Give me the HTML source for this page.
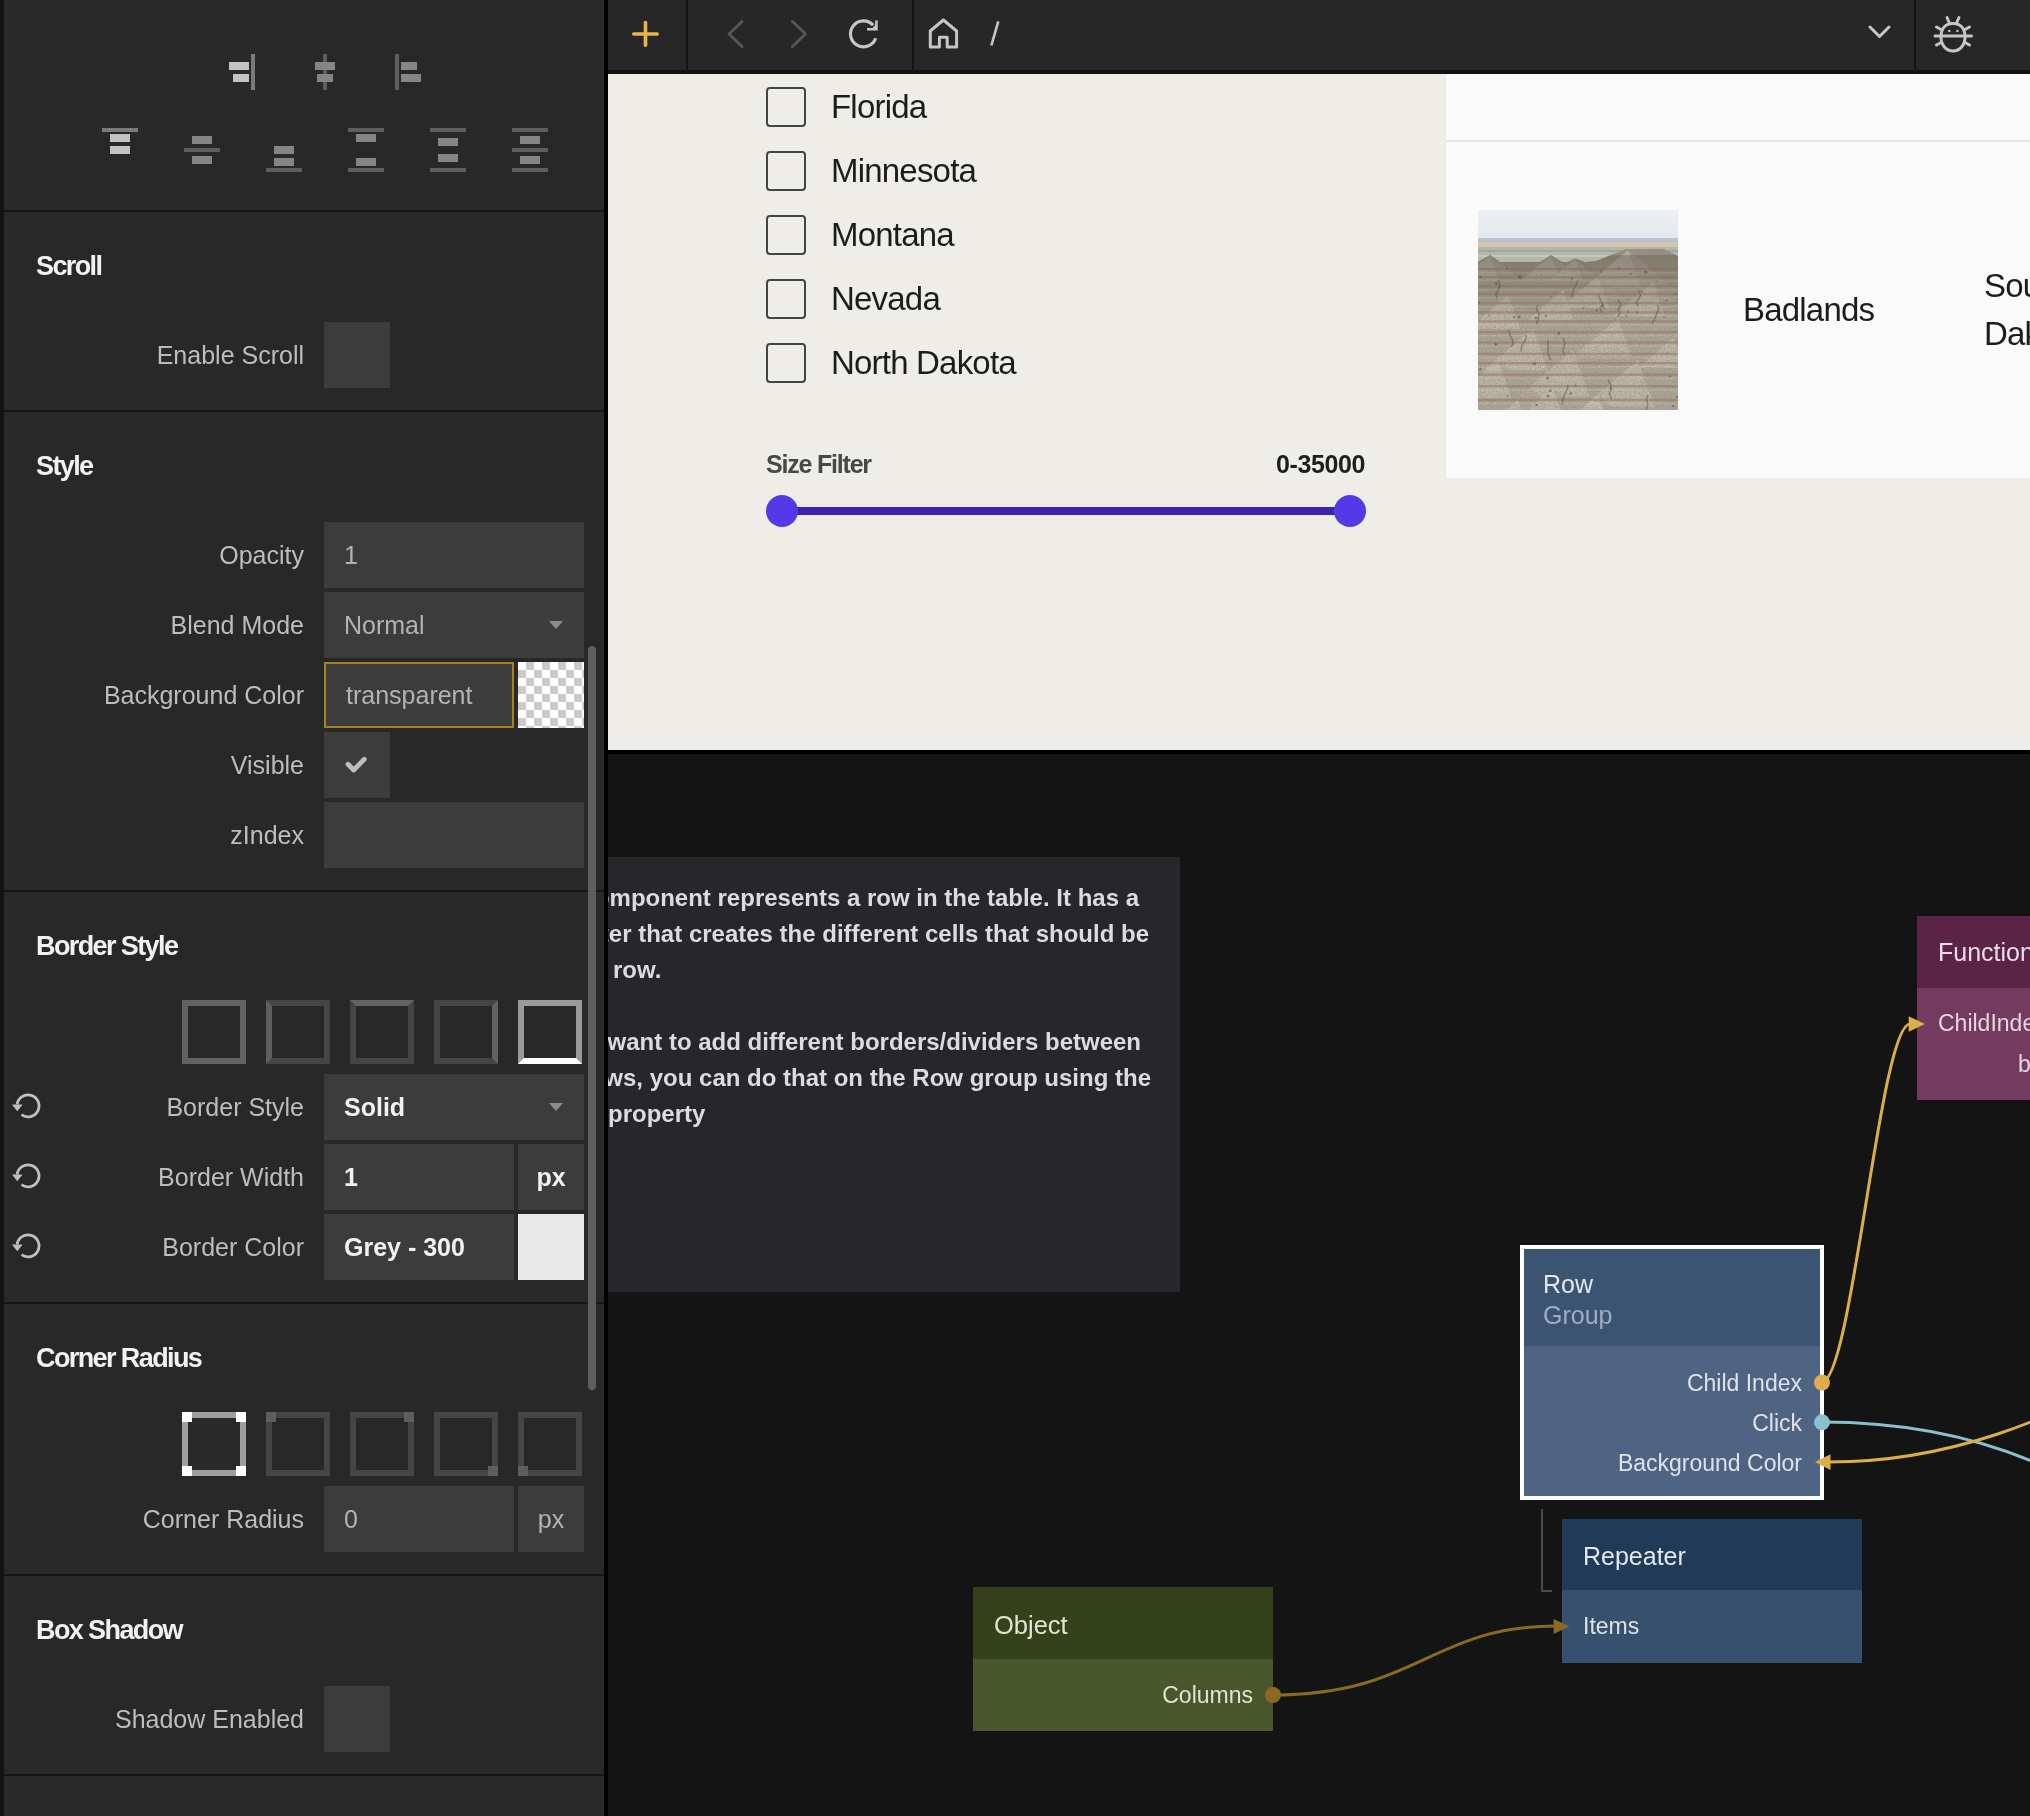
<!DOCTYPE html>
<html><head><meta charset="utf-8">
<style>
*{margin:0;padding:0;box-sizing:border-box}
html,body{width:2030px;height:1816px;overflow:hidden;background:#141414;font-family:"Liberation Sans",sans-serif}
.a{position:absolute}
#lp{position:absolute;left:0;top:0;width:604px;height:1816px;background:#282828}
#lstrip{position:absolute;left:0;top:0;width:4px;height:1816px;background:#131313}
.sep{position:absolute;left:4px;width:600px;height:2px;background:#141414}
.h{position:absolute;left:36px;font-size:27px;font-weight:bold;color:#f2f2f2;line-height:30px;white-space:nowrap;letter-spacing:-1.6px}
.lb{position:absolute;right:300px;font-size:25px;color:#bdbdbd;line-height:66px;height:66px;white-space:nowrap;text-align:right}
.in{position:absolute;left:324px;width:260px;height:66px;background:#3c3c3c;font-size:25px;line-height:66px;color:#b3b3b3;padding-left:20px;white-space:nowrap}
.in.s{width:190px}
.unit{position:absolute;left:518px;width:66px;height:66px;background:#3c3c3c;font-size:25px;line-height:66px;color:#b3b3b3;text-align:center}
.cb{position:absolute;left:324px;width:66px;height:66px;background:#3c3c3c}
.bold{font-weight:bold;color:#f2f2f2}
.tri{position:absolute;left:549px;width:0;height:0;border-left:7px solid transparent;border-right:7px solid transparent;border-top:8px solid #8c8c8c}
.ic{position:absolute;background:#858585}
.icl{position:absolute;background:#5e5e5e}
.ich{background:#c2c2c2}
.iclh{background:#7a7a7a}
.pt{font-size:33px;color:#1c1c1c;white-space:nowrap;letter-spacing:-0.8px}
.cl{position:absolute;font-size:24px;font-weight:bold;color:#dcdcdc;line-height:36px;white-space:nowrap}
.nt{font-size:25px;color:#e4e7ec;line-height:40px;white-space:nowrap}
.np{font-size:23px;color:#dfe2e8;line-height:40px;white-space:nowrap}
</style></head><body><div id="root" style="position:absolute;left:0;top:0;width:2030px;height:1816px;overflow:hidden;will-change:transform">
<div id="lp">
  <div id="lstrip"></div>
  <!-- align icons row 1 -->
  <div class="icl iclh" style="left:251px;top:54px;width:4px;height:36px"></div>
  <div class="ic ich" style="left:229px;top:62px;width:20px;height:8px"></div>
  <div class="ic ich" style="left:233px;top:74px;width:16px;height:8px"></div>

  <div class="icl" style="left:323px;top:54px;width:4px;height:36px"></div>
  <div class="ic" style="left:315px;top:62px;width:20px;height:8px"></div>
  <div class="ic" style="left:317px;top:74px;width:16px;height:8px"></div>

  <div class="icl" style="left:395px;top:54px;width:4px;height:36px"></div>
  <div class="ic" style="left:401px;top:62px;width:16px;height:8px"></div>
  <div class="ic" style="left:401px;top:74px;width:20px;height:8px"></div>
  <!-- align icons row 2 -->
  <div class="icl iclh" style="left:102px;top:128px;width:36px;height:4px"></div>
  <div class="ic ich" style="left:110px;top:134px;width:20px;height:8px"></div>
  <div class="ic ich" style="left:110px;top:146px;width:20px;height:8px"></div>

  <div class="icl" style="left:184px;top:148px;width:36px;height:4px"></div>
  <div class="ic" style="left:192px;top:136px;width:20px;height:8px"></div>
  <div class="ic" style="left:192px;top:156px;width:20px;height:8px"></div>

  <div class="icl" style="left:266px;top:168px;width:36px;height:4px"></div>
  <div class="ic" style="left:274px;top:146px;width:20px;height:8px"></div>
  <div class="ic" style="left:274px;top:158px;width:20px;height:8px"></div>

  <div class="icl" style="left:348px;top:128px;width:36px;height:4px"></div>
  <div class="icl" style="left:348px;top:168px;width:36px;height:4px"></div>
  <div class="ic" style="left:356px;top:134px;width:20px;height:8px"></div>
  <div class="ic" style="left:356px;top:158px;width:20px;height:8px"></div>

  <div class="icl" style="left:430px;top:128px;width:36px;height:4px"></div>
  <div class="icl" style="left:430px;top:168px;width:36px;height:4px"></div>
  <div class="ic" style="left:438px;top:138px;width:20px;height:8px"></div>
  <div class="ic" style="left:438px;top:154px;width:20px;height:8px"></div>

  <div class="icl" style="left:512px;top:128px;width:36px;height:4px"></div>
  <div class="icl" style="left:512px;top:148px;width:36px;height:4px"></div>
  <div class="icl" style="left:512px;top:168px;width:36px;height:4px"></div>
  <div class="ic" style="left:520px;top:136px;width:20px;height:8px"></div>
  <div class="ic" style="left:520px;top:156px;width:20px;height:8px"></div>

  <div class="sep" style="top:210px"></div>
  <!-- Scroll -->
  <div class="h" style="top:251px">Scroll</div>
  <div class="lb" style="top:322px">Enable Scroll</div>
  <div class="cb" style="top:322px"></div>
  <div class="sep" style="top:410px"></div>
  <!-- Style -->
  <div class="h" style="top:451px">Style</div>
  <div class="lb" style="top:522px">Opacity</div>
  <div class="in" style="top:522px">1</div>
  <div class="lb" style="top:592px">Blend Mode</div>
  <div class="in" style="top:592px">Normal</div>
  <div class="tri" style="top:621px"></div>
  <div class="lb" style="top:662px">Background Color</div>
  <div class="in s" style="top:662px;border:2px solid #a8801f;padding-left:20px;line-height:62px">transparent</div>
  <div class="a" style="left:518px;top:662px;width:66px;height:66px;background:repeating-conic-gradient(#cbcbcb 0 25%,#fff 0 50%) 0 0/16px 16px"></div>
  <div class="lb" style="top:732px">Visible</div>
  <div class="cb" style="top:732px"><svg class="a" style="left:0;top:0" width="66" height="66"><path d="M24 32.3 L29.7 38 L40.3 27.2" fill="none" stroke="#bdbdbd" stroke-width="4.8" stroke-linecap="round" stroke-linejoin="round"/></svg></div>
  <div class="lb" style="top:802px">zIndex</div>
  <div class="in" style="top:802px"></div>
  <div class="sep" style="top:890px"></div>
  <!-- Border Style -->
  <div class="h" style="top:931px">Border Style</div>

  <div class="a" style="left:182px;top:1000px;width:64px;height:64px;border:6px solid #626262"></div>
  <div class="a" style="left:266px;top:1000px;width:64px;height:64px;border:6px solid #454545;border-left-color:#5e5e5e"></div>
  <div class="a" style="left:350px;top:1000px;width:64px;height:64px;border:6px solid #454545;border-top-color:#626262"></div>
  <div class="a" style="left:434px;top:1000px;width:64px;height:64px;border:6px solid #454545;border-right-color:#626262"></div>
  <div class="a" style="left:518px;top:1000px;width:64px;height:64px;border:6px solid #9a9a9a;border-bottom-color:#fff"></div>
  <svg class="a" style="left:12px;top:1090px" width="32" height="32"><path d="M9.5 24.7 A11 11 0 1 0 5.1 14.5" fill="none" stroke="#c0c0c0" stroke-width="2.8"/><path d="M0 14.6 L10.6 14.6 L5.3 21.2 Z" fill="#c0c0c0"/></svg>
  <div class="lb" style="top:1074px">Border Style</div>
  <div class="in bold" style="top:1074px">Solid</div>
  <div class="tri" style="top:1103px"></div>
  <svg class="a" style="left:12px;top:1160px" width="32" height="32"><path d="M9.5 24.7 A11 11 0 1 0 5.1 14.5" fill="none" stroke="#c0c0c0" stroke-width="2.8"/><path d="M0 14.6 L10.6 14.6 L5.3 21.2 Z" fill="#c0c0c0"/></svg>
  <div class="lb" style="top:1144px">Border Width</div>
  <div class="in s bold" style="top:1144px">1</div>
  <div class="unit bold" style="top:1144px">px</div>
  <svg class="a" style="left:12px;top:1230px" width="32" height="32"><path d="M9.5 24.7 A11 11 0 1 0 5.1 14.5" fill="none" stroke="#c0c0c0" stroke-width="2.8"/><path d="M0 14.6 L10.6 14.6 L5.3 21.2 Z" fill="#c0c0c0"/></svg>
  <div class="lb" style="top:1214px">Border Color</div>
  <div class="in s bold" style="top:1214px">Grey - 300</div>
  <div class="a" style="left:518px;top:1214px;width:66px;height:66px;background:#e8e8e8"></div>
  <div class="sep" style="top:1302px"></div>
  <!-- Corner Radius -->
  <div class="h" style="top:1343px">Corner Radius</div>

  <div class="a" style="left:182px;top:1412px;width:64px;height:64px;border:6px solid #9e9e9e"><div class="a" style="left:-6px;top:-6px;width:10px;height:10px;background:#fff"></div><div class="a" style="right:-6px;top:-6px;width:10px;height:10px;background:#fff"></div><div class="a" style="left:-6px;bottom:-6px;width:10px;height:10px;background:#fff"></div><div class="a" style="right:-6px;bottom:-6px;width:10px;height:10px;background:#fff"></div></div>
  <div class="a" style="left:266px;top:1412px;width:64px;height:64px;border:6px solid #454545"><div class="a" style="left:-6px;top:-6px;width:10px;height:10px;background:#5e5e5e"></div></div>
  <div class="a" style="left:350px;top:1412px;width:64px;height:64px;border:6px solid #454545"><div class="a" style="right:-6px;top:-6px;width:10px;height:10px;background:#5e5e5e"></div></div>
  <div class="a" style="left:434px;top:1412px;width:64px;height:64px;border:6px solid #454545"><div class="a" style="right:-6px;bottom:-6px;width:10px;height:10px;background:#5e5e5e"></div></div>
  <div class="a" style="left:518px;top:1412px;width:64px;height:64px;border:6px solid #454545"><div class="a" style="left:-6px;bottom:-6px;width:10px;height:10px;background:#5e5e5e"></div></div>
  <div class="lb" style="top:1486px">Corner Radius</div>
  <div class="in s" style="top:1486px">0</div>
  <div class="unit" style="top:1486px">px</div>
  <div class="sep" style="top:1574px"></div>
  <div class="h" style="top:1615px">Box Shadow</div>
  <div class="lb" style="top:1686px">Shadow Enabled</div>
  <div class="cb" style="top:1686px"></div>
  <div class="sep" style="top:1774px"></div>
  <!-- scrollbar -->
  <div class="a" style="left:588px;top:646px;width:8px;height:744px;border-radius:4px;background:#5e5e5e"></div>
</div>
<div class="a" style="left:604px;top:0;width:4px;height:1816px;background:#000"></div>


<!-- canvas -->
<div class="a" style="left:608px;top:754px;width:1422px;height:1062px;background:#141414;overflow:hidden">
</div>
<div class="a" id="cmt" style="left:608px;top:857px;width:572px;height:435px;background:#26262b;overflow:hidden">
  <div class="cl" style="top:23px;right:41px">This component represents a row in the table. It has a</div>
  <div class="cl" style="top:59px;right:31px">repeater that creates the different cells that should be</div>
  <div class="cl" style="top:95px;left:5px">row.</div>
  <div class="cl" style="top:167px;right:39px">If you want to add different borders/dividers between</div>
  <div class="cl" style="top:203px;right:29px">rows, you can do that on the Row group using the</div>
  <div class="cl" style="top:239px;left:0px">property</div>
</div>
<svg class="a" style="left:0;top:0" width="2030" height="1816">
  <g fill="none" stroke-width="3">
    <path d="M1822 1382 C1852 1382 1880 1024 1910 1024" stroke="#dcae4a"/>
    <path d="M1822 1422 C2137.6 1422 2201.4 1633.6 2338.3 1633.6" stroke="#8bbfcd"/>
    <path d="M1830 1462 C1984.3 1462 2097.4 1388.6 2103.8 1388.6" stroke="#dcae4a"/>
    <path d="M1273 1695 C1418 1695 1431 1626 1556 1626" stroke="#8a6a22"/>
    <path d="M1542 1509 V1591 H1552" stroke="#4a4a4a" stroke-width="2"/>
  </g>
</svg>
<!-- Function node -->
<div class="a" style="left:1917px;top:916px;width:200px;height:72px;background:#5b2346"></div>
<div class="a" style="left:1917px;top:988px;width:200px;height:112px;background:#753a5f"></div>
<div class="a nt" style="left:1938px;top:932px;color:#ecdde8;font-size:25px">Function</div>
<div class="a np" style="left:1938px;top:1003px;color:#e6d6e2">ChildIndex</div>
<div class="a np" style="left:2018px;top:1044px;color:#e6d6e2">b</div>
<!-- Row node -->
<div class="a" style="left:1520px;top:1245px;width:304px;height:255px;background:#fff"></div>
<div class="a" style="left:1524px;top:1249px;width:296px;height:97px;background:#3a5472"></div>
<div class="a" style="left:1524px;top:1346px;width:296px;height:150px;background:#4f6482"></div>
<div class="a nt" style="left:1543px;top:1264px">Row</div>
<div class="a nt" style="left:1543px;top:1295px;color:#a3adbd">Group</div>
<div class="a np" style="right:228px;top:1363px;text-align:right">Child Index</div>
<div class="a np" style="right:228px;top:1403px;text-align:right">Click</div>
<div class="a np" style="right:228px;top:1443px;text-align:right">Background Color</div>
<!-- Repeater -->
<div class="a" style="left:1562px;top:1519px;width:300px;height:71px;background:#213a58"></div>
<div class="a" style="left:1562px;top:1590px;width:300px;height:73px;background:#36506e"></div>
<div class="a nt" style="left:1583px;top:1536px">Repeater</div>
<div class="a np" style="left:1583px;top:1606px">Items</div>
<!-- Object -->
<div class="a" style="left:973px;top:1587px;width:300px;height:72px;background:#35411b"></div>
<div class="a" style="left:973px;top:1659px;width:300px;height:72px;background:#4a572c"></div>
<div class="a nt" style="left:994px;top:1605px;color:#e0e4d2;font-size:25.5px">Object</div>
<div class="a np" style="right:777px;top:1675px;text-align:right;color:#e0e4d2">Columns</div>
<svg class="a" style="left:0;top:0" width="2030" height="1816">
  <circle cx="1822" cy="1382.5" r="8" fill="#dcae4a"/>
  <circle cx="1822" cy="1422.3" r="8" fill="#8bbfcd"/>
  <path d="M1815 1462 L1830.5 1454.3 L1830.5 1470 Z" fill="#dcae4a"/>
  <path d="M1925 1024 L1908.7 1016.3 L1908.7 1031.7 Z" fill="#dcae4a"/>
  <path d="M1569.6 1626.3 L1553.6 1619 L1553.6 1634 Z" fill="#8a6a22"/>
  <circle cx="1273" cy="1695" r="8" fill="#8a6a22"/>
</svg>
<!-- toolbar -->
<div class="a" style="left:608px;top:0;width:1422px;height:70px;background:#272727"></div>
<div class="a" style="left:686px;top:0;width:2px;height:70px;background:#151515"></div>
<div class="a" style="left:912px;top:0;width:2px;height:70px;background:#151515"></div>
<div class="a" style="left:1914px;top:0;width:2px;height:70px;background:#151515"></div>
<div class="a" style="left:608px;top:70px;width:1422px;height:4px;background:#111"></div>
<svg class="a" style="left:608px;top:0" width="1422" height="70">
  <g fill="none" stroke-linecap="round" stroke-linejoin="round">
    <path d="M25.8 34 H49.2 M37.5 22.5 V45.2" stroke="#e6b64a" stroke-width="3.6"/>
    <path d="M134 21.5 L121 34 L134 46.5" stroke="#575757" stroke-width="3"/>
    <path d="M184.5 21.5 L197.5 34 L184.5 46.5" stroke="#575757" stroke-width="3"/>
    <path d="M267.7 38.3 A13 13 0 1 1 265.2 25.2" stroke="#c6c6c6" stroke-width="3.2" stroke-linecap="butt"/>
    <path d="M259 27.9 L264.5 27.9 L267.2 25 L267.2 20.5 L269.7 20.5 L269.7 30.6 L259 30.6 Z" fill="#c6c6c6" stroke="none"/>
    <path d="M322.3 31 L335.4 20 L348.6 31 V46.9 H339.2 V37.2 H331.4 V46.9 H322.3 Z" stroke="#c6c6c6" stroke-width="3"/>
    <path d="M390.3 21.4 L383.4 45.5" stroke="#c6c6c6" stroke-width="2.6" stroke-linecap="butt"/>
    <path d="M1262 27 L1271.5 36.5 L1281 27" stroke="#c6c6c6" stroke-width="3"/>
    <g stroke="#c6c6c6" stroke-width="3">
      <path d="M1345 23.5 C1336 23.5 1333 30 1333 37 C1333 45 1338 51 1345 51 C1352 51 1357 45 1357 37 C1357 30 1354 23.5 1345 23.5 Z"/>
      <path d="M1327 36 H1363.5"/>
      <path d="M1339 17.5 L1341 22 M1351 17.5 L1349 22"/>
      <path d="M1328.5 27 L1333 29.5 M1361.5 27 L1357 29.5 M1328.5 45 L1333 42.5 M1361.5 45 L1357 42.5"/>
    </g>
    <circle cx="1341.3" cy="31" r="1.3" fill="#c6c6c6"/><circle cx="1349.4" cy="31" r="1.3" fill="#c6c6c6"/>
  </g>
</svg>
<!-- preview -->
<div class="a" style="left:608px;top:74px;width:1422px;height:676px;background:#eeede8"></div>
<div class="a" style="left:608px;top:750px;width:1422px;height:4px;background:#000"></div>
<div class="a" style="left:766px;top:87px;width:40px;height:40px;border:2px solid #444;border-radius:4px"></div>
<div class="a pt" style="left:831px;top:87px;height:40px;line-height:40px">Florida</div>
<div class="a" style="left:766px;top:151px;width:40px;height:40px;border:2px solid #444;border-radius:4px"></div>
<div class="a pt" style="left:831px;top:151px;height:40px;line-height:40px">Minnesota</div>
<div class="a" style="left:766px;top:215px;width:40px;height:40px;border:2px solid #444;border-radius:4px"></div>
<div class="a pt" style="left:831px;top:215px;height:40px;line-height:40px">Montana</div>
<div class="a" style="left:766px;top:279px;width:40px;height:40px;border:2px solid #444;border-radius:4px"></div>
<div class="a pt" style="left:831px;top:279px;height:40px;line-height:40px">Nevada</div>
<div class="a" style="left:766px;top:343px;width:40px;height:40px;border:2px solid #444;border-radius:4px"></div>
<div class="a pt" style="left:831px;top:343px;height:40px;line-height:40px">North Dakota</div>

<div class="a" style="left:766px;top:444px;line-height:40px;font-size:25px;font-weight:bold;color:#484848;letter-spacing:-1.2px">Size Filter</div>
<div class="a" style="left:1165px;width:200px;text-align:right;top:444px;line-height:40px;font-size:25px;font-weight:bold;color:#1e1e1e;letter-spacing:-0.4px">0-35000</div>
<div class="a" style="left:782px;top:507px;width:568px;height:8px;background:#3b22b0"></div>
<div class="a" style="left:766px;top:495px;width:32px;height:32px;border-radius:50%;background:#5639e6"></div>
<div class="a" style="left:1334px;top:495px;width:32px;height:32px;border-radius:50%;background:#5639e6"></div>
<!-- table -->
<div class="a" style="left:1446px;top:74px;width:584px;height:404px;background:#fafafa"></div>
<div class="a" style="left:1446px;top:140px;width:584px;height:2px;background:#e6e6e6"></div>
<div class="a" id="photo" style="left:1478px;top:210px;width:200px;height:200px;overflow:hidden"><svg width="200" height="200" viewBox="0 0 200 200"><defs><linearGradient id="sk" x1="0" y1="0" x2="0" y2="1"><stop offset="0" stop-color="#edf0f3"/><stop offset="1" stop-color="#e3e8ee"/></linearGradient><linearGradient id="hl" x1="0" y1="0" x2="0" y2="1"><stop offset="0" stop-color="#8c8374"/><stop offset="0.25" stop-color="#9a9283"/><stop offset="0.55" stop-color="#aaa395"/><stop offset="1" stop-color="#ada698"/></linearGradient><filter id="gr" x="0" y="0" width="100%" height="100%"><feTurbulence type="fractalNoise" baseFrequency="0.8" numOctaves="2" seed="4"/><feColorMatrix type="matrix" values="0 0 0 0 0.25  0 0 0 0 0.24  0 0 0 0 0.18  0 0 0 -3 1.7"/></filter><clipPath id="hc"><path d="M0 52 L12 45 L22 52 L62 52 L73 45 L84 52 L90 52 L97 48.5 L107 52 L118 51 L148 39 L186 39 L200 46 L200 200 L0 200 Z"/></clipPath></defs><rect width="200" height="29" fill="url(#sk)"/><rect y="28" width="200" height="4" fill="#b9c3cf"/><rect y="32" width="200" height="5" fill="#d6c4ad"/><rect y="37" width="200" height="15" fill="#b3b6ab"/><rect y="40" width="200" height="2" fill="#97a29c" opacity="0.8"/><rect y="45" width="200" height="2" fill="#cfcabd" opacity="0.8"/><g clip-path="url(#hc)"><rect width="200" height="200" fill="url(#hl)"/><path d="M12 45 L-18.0 70.5 L42.0 70.5 Z" fill="#cbc5b8" opacity="0.55"/><path d="M12 45 L21.0 70.5 L42.0 70.5 Z" fill="#857e70" opacity="0.3"/><path d="M73 45 L43.0 70.5 L103.0 70.5 Z" fill="#cbc5b8" opacity="0.55"/><path d="M73 45 L82.0 70.5 L103.0 70.5 Z" fill="#857e70" opacity="0.3"/><path d="M97 49 L72.0 70.2 L122.0 70.2 Z" fill="#cbc5b8" opacity="0.55"/><path d="M97 49 L104.5 70.2 L122.0 70.2 Z" fill="#857e70" opacity="0.3"/><path d="M150 40 L105.0 78.2 L195.0 78.2 Z" fill="#cbc5b8" opacity="0.55"/><path d="M150 40 L163.5 78.2 L195.0 78.2 Z" fill="#857e70" opacity="0.3"/><path d="M30 85 L-10.0 119.0 L70.0 119.0 Z" fill="#cbc5b8" opacity="0.55"/><path d="M30 85 L42.0 119.0 L70.0 119.0 Z" fill="#857e70" opacity="0.3"/><path d="M85 80 L50.0 109.8 L120.0 109.8 Z" fill="#cbc5b8" opacity="0.55"/><path d="M85 80 L95.5 109.8 L120.0 109.8 Z" fill="#857e70" opacity="0.3"/><path d="M120 66 L82.0 98.3 L158.0 98.3 Z" fill="#cbc5b8" opacity="0.55"/><path d="M120 66 L131.4 98.3 L158.0 98.3 Z" fill="#857e70" opacity="0.3"/><path d="M175 72 L135.0 106.0 L215.0 106.0 Z" fill="#cbc5b8" opacity="0.55"/><path d="M175 72 L187.0 106.0 L215.0 106.0 Z" fill="#857e70" opacity="0.3"/><path d="M55 118 L5.0 160.5 L105.0 160.5 Z" fill="#cbc5b8" opacity="0.55"/><path d="M55 118 L70.0 160.5 L105.0 160.5 Z" fill="#857e70" opacity="0.3"/><path d="M140 108 L95.0 146.2 L185.0 146.2 Z" fill="#cbc5b8" opacity="0.55"/><path d="M140 108 L153.5 146.2 L185.0 146.2 Z" fill="#857e70" opacity="0.3"/><path d="M95 140 L40.0 186.8 L150.0 186.8 Z" fill="#cbc5b8" opacity="0.55"/><path d="M95 140 L111.5 186.8 L150.0 186.8 Z" fill="#857e70" opacity="0.3"/><path d="M20 150 L-25.0 188.2 L65.0 188.2 Z" fill="#cbc5b8" opacity="0.55"/><path d="M20 150 L33.5 188.2 L65.0 188.2 Z" fill="#857e70" opacity="0.3"/><path d="M160 150 L105.0 196.8 L215.0 196.8 Z" fill="#cbc5b8" opacity="0.55"/><path d="M160 150 L176.5 196.8 L215.0 196.8 Z" fill="#857e70" opacity="0.3"/><path d="M75 178 L30.0 216.2 L120.0 216.2 Z" fill="#cbc5b8" opacity="0.55"/><path d="M75 178 L88.5 216.2 L120.0 216.2 Z" fill="#857e70" opacity="0.3"/><path d="M195 128 L160.0 157.8 L230.0 157.8 Z" fill="#cbc5b8" opacity="0.55"/><path d="M195 128 L205.5 157.8 L230.0 157.8 Z" fill="#857e70" opacity="0.3"/><path d="M120 185 L75.0 223.2 L165.0 223.2 Z" fill="#cbc5b8" opacity="0.55"/><path d="M120 185 L133.5 223.2 L165.0 223.2 Z" fill="#857e70" opacity="0.3"/><path d="M40 190 L10.0 215.5 L70.0 215.5 Z" fill="#cbc5b8" opacity="0.55"/><path d="M40 190 L49.0 215.5 L70.0 215.5 Z" fill="#857e70" opacity="0.3"/><rect y="57.9" width="200" height="2.4" fill="#a06f5c" opacity="0.55"/><rect y="61.9" width="200" height="1.6" fill="#d2ccc0" opacity="0.35"/><rect y="66.1" width="200" height="2.4" fill="#a06f5c" opacity="0.55"/><rect y="70.1" width="200" height="1.6" fill="#d2ccc0" opacity="0.35"/><rect y="75.0" width="200" height="2.4" fill="#a06f5c" opacity="0.55"/><rect y="79.0" width="200" height="1.6" fill="#d2ccc0" opacity="0.35"/><rect y="82.9" width="200" height="2.4" fill="#a06f5c" opacity="0.55"/><rect y="86.9" width="200" height="1.6" fill="#d2ccc0" opacity="0.35"/><rect y="92.0" width="200" height="2.4" fill="#a06f5c" opacity="0.55"/><rect y="96.0" width="200" height="1.6" fill="#d2ccc0" opacity="0.35"/><rect y="101.2" width="200" height="2.4" fill="#a06f5c" opacity="0.55"/><rect y="105.2" width="200" height="1.6" fill="#d2ccc0" opacity="0.35"/><rect y="110.2" width="200" height="2.4" fill="#a06f5c" opacity="0.55"/><rect y="114.2" width="200" height="1.6" fill="#d2ccc0" opacity="0.35"/><rect y="121.0" width="200" height="2.4" fill="#a06f5c" opacity="0.55"/><rect y="125.0" width="200" height="1.6" fill="#d2ccc0" opacity="0.35"/><rect y="131.3" width="200" height="2.4" fill="#a06f5c" opacity="0.55"/><rect y="135.3" width="200" height="1.6" fill="#d2ccc0" opacity="0.35"/><rect y="142.7" width="200" height="2.4" fill="#a06f5c" opacity="0.55"/><rect y="146.7" width="200" height="1.6" fill="#d2ccc0" opacity="0.35"/><rect y="152.0" width="200" height="2.4" fill="#a06f5c" opacity="0.55"/><rect y="156.0" width="200" height="1.6" fill="#d2ccc0" opacity="0.35"/><rect y="163.5" width="200" height="2.4" fill="#a06f5c" opacity="0.55"/><rect y="167.5" width="200" height="1.6" fill="#d2ccc0" opacity="0.35"/><rect y="175.0" width="200" height="2.4" fill="#a06f5c" opacity="0.55"/><rect y="179.0" width="200" height="1.6" fill="#d2ccc0" opacity="0.35"/><rect y="188.7" width="200" height="2.4" fill="#a06f5c" opacity="0.55"/><rect y="192.7" width="200" height="1.6" fill="#d2ccc0" opacity="0.35"/><path d="M30 120 L31.2 123.1 L34.1 129.0 L35.0 133.9 L32.9 136.9" stroke="#4e4d3c" stroke-width="1.5" fill="none" opacity="0.5"/><path d="M48 125 L48.2 128.2 L46.3 131.9 L43.5 136.3 L43.1 141.8" stroke="#4e4d3c" stroke-width="1.5" fill="none" opacity="0.5"/><path d="M70 130 L70.1 134.9 L70.1 139.9 L69.9 143.7 L72.8 149.7" stroke="#4e4d3c" stroke-width="1.5" fill="none" opacity="0.5"/><path d="M85 128 L87.0 133.1 L85.9 136.8 L84.7 140.0 L86.3 144.2" stroke="#4e4d3c" stroke-width="1.5" fill="none" opacity="0.5"/><path d="M120 85 L122.1 89.2 L124.8 94.7 L121.8 98.3 L124.3 102.7" stroke="#4e4d3c" stroke-width="1.5" fill="none" opacity="0.5"/><path d="M140 90 L142.9 94.2 L140.3 99.1 L142.0 102.9 L139.5 106.9" stroke="#4e4d3c" stroke-width="1.5" fill="none" opacity="0.5"/><path d="M160 80 L162.8 85.3 L160.5 89.0 L158.1 92.2 L159.9 95.7" stroke="#4e4d3c" stroke-width="1.5" fill="none" opacity="0.5"/><path d="M180 95 L180.4 99.3 L178.5 104.5 L176.3 109.5 L174.0 113.7" stroke="#4e4d3c" stroke-width="1.5" fill="none" opacity="0.5"/><path d="M60 95 L58.3 98.8 L61.1 104.2 L59.9 109.9 L58.2 114.1" stroke="#4e4d3c" stroke-width="1.5" fill="none" opacity="0.5"/><path d="M20 70 L22.1 74.9 L19.7 80.9 L18.0 84.7 L19.6 88.7" stroke="#4e4d3c" stroke-width="1.5" fill="none" opacity="0.5"/><path d="M100 70 L98.8 73.2 L96.3 78.0 L94.8 82.8 L94.0 87.1" stroke="#4e4d3c" stroke-width="1.5" fill="none" opacity="0.5"/><path d="M130 170 L132.8 174.5 L133.2 180.1 L131.3 183.5 L133.7 189.0" stroke="#4e4d3c" stroke-width="1.5" fill="none" opacity="0.5"/><path d="M170 185 L168.5 188.6 L169.9 194.4 L168.1 200.2 L170.4 205.1" stroke="#4e4d3c" stroke-width="1.5" fill="none" opacity="0.5"/><path d="M90 175 L89.5 178.3 L86.8 184.2 L85.2 189.3 L83.7 194.8" stroke="#4e4d3c" stroke-width="1.5" fill="none" opacity="0.5"/><linearGradient id="dk" x1="0" y1="0" x2="0" y2="1"><stop offset="0" stop-color="#4d4a3e" stop-opacity="0.35"/><stop offset="1" stop-color="#4d4a3e" stop-opacity="0"/></linearGradient><rect y="45" width="200" height="65" fill="url(#dk)"/><ellipse cx="124.6" cy="95.8" rx="1.7" ry="1.4" fill="#4a4a3a" opacity="0.55"/><ellipse cx="148.0" cy="105.7" rx="0.8" ry="1.0" fill="#4a4a3a" opacity="0.55"/><ellipse cx="188.7" cy="90.7" rx="1.9" ry="0.7" fill="#4a4a3a" opacity="0.55"/><ellipse cx="93.8" cy="68.6" rx="1.4" ry="1.1" fill="#4a4a3a" opacity="0.55"/><ellipse cx="2.6" cy="66.9" rx="1.1" ry="1.4" fill="#4a4a3a" opacity="0.55"/><ellipse cx="153.1" cy="63.8" rx="1.7" ry="0.7" fill="#4a4a3a" opacity="0.55"/><ellipse cx="123.5" cy="62.0" rx="0.8" ry="1.4" fill="#4a4a3a" opacity="0.55"/><ellipse cx="41.9" cy="66.9" rx="2.0" ry="1.4" fill="#4a4a3a" opacity="0.55"/><ellipse cx="57.9" cy="107.9" rx="1.4" ry="1.2" fill="#4a4a3a" opacity="0.55"/><ellipse cx="41.0" cy="106.8" rx="1.6" ry="1.5" fill="#4a4a3a" opacity="0.55"/><ellipse cx="178.7" cy="71.4" rx="1.2" ry="0.7" fill="#4a4a3a" opacity="0.55"/><ellipse cx="29.1" cy="58.6" rx="1.1" ry="1.1" fill="#4a4a3a" opacity="0.55"/><ellipse cx="0.7" cy="92.3" rx="1.2" ry="0.9" fill="#4a4a3a" opacity="0.55"/><ellipse cx="163.7" cy="81.4" rx="1.1" ry="1.0" fill="#4a4a3a" opacity="0.55"/><ellipse cx="140.9" cy="58.1" rx="2.0" ry="0.6" fill="#4a4a3a" opacity="0.55"/><ellipse cx="150.0" cy="101.5" rx="0.8" ry="1.3" fill="#4a4a3a" opacity="0.55"/><ellipse cx="73.2" cy="86.8" rx="0.8" ry="0.6" fill="#4a4a3a" opacity="0.55"/><ellipse cx="36.2" cy="107.5" rx="1.0" ry="1.3" fill="#4a4a3a" opacity="0.55"/><ellipse cx="185.9" cy="106.8" rx="1.2" ry="0.9" fill="#4a4a3a" opacity="0.55"/><ellipse cx="104.9" cy="97.7" rx="0.9" ry="1.3" fill="#4a4a3a" opacity="0.55"/><ellipse cx="159.4" cy="102.3" rx="0.8" ry="1.5" fill="#4a4a3a" opacity="0.55"/><ellipse cx="18.2" cy="73.7" rx="1.5" ry="1.4" fill="#4a4a3a" opacity="0.55"/><ellipse cx="68.0" cy="105.8" rx="1.4" ry="0.9" fill="#4a4a3a" opacity="0.55"/><ellipse cx="63.4" cy="64.8" rx="0.8" ry="0.7" fill="#4a4a3a" opacity="0.55"/><ellipse cx="137.8" cy="109.8" rx="1.0" ry="0.6" fill="#4a4a3a" opacity="0.55"/><ellipse cx="197.3" cy="84.3" rx="1.3" ry="0.8" fill="#4a4a3a" opacity="0.55"/><ellipse cx="118.8" cy="100.4" rx="1.3" ry="1.0" fill="#4a4a3a" opacity="0.55"/><ellipse cx="11.1" cy="105.4" rx="0.8" ry="1.0" fill="#4a4a3a" opacity="0.55"/><ellipse cx="167.7" cy="62.2" rx="1.7" ry="1.5" fill="#4a4a3a" opacity="0.55"/><ellipse cx="126.1" cy="98.3" rx="0.9" ry="1.0" fill="#4a4a3a" opacity="0.55"/><ellipse cx="29.8" cy="186.0" rx="1.1" ry="1.0" fill="#4a4a3a" opacity="0.55"/><ellipse cx="199.9" cy="186.7" rx="2.0" ry="1.0" fill="#4a4a3a" opacity="0.55"/><ellipse cx="97.6" cy="175.7" rx="1.3" ry="0.9" fill="#4a4a3a" opacity="0.55"/><ellipse cx="80.8" cy="123.2" rx="1.2" ry="1.5" fill="#4a4a3a" opacity="0.55"/><ellipse cx="192.0" cy="166.4" rx="1.4" ry="0.9" fill="#4a4a3a" opacity="0.55"/><ellipse cx="17.8" cy="134.5" rx="1.7" ry="1.4" fill="#4a4a3a" opacity="0.55"/><ellipse cx="72.3" cy="180.7" rx="1.7" ry="1.2" fill="#4a4a3a" opacity="0.55"/><ellipse cx="132.8" cy="178.4" rx="1.2" ry="1.2" fill="#4a4a3a" opacity="0.55"/><ellipse cx="56.2" cy="153.7" rx="1.7" ry="1.2" fill="#4a4a3a" opacity="0.55"/><ellipse cx="58.8" cy="195.1" rx="1.6" ry="1.1" fill="#4a4a3a" opacity="0.55"/><ellipse cx="2.3" cy="159.2" rx="1.1" ry="1.2" fill="#4a4a3a" opacity="0.55"/><ellipse cx="92.6" cy="183.5" rx="1.6" ry="1.3" fill="#4a4a3a" opacity="0.55"/><ellipse cx="69.6" cy="168.0" rx="1.7" ry="1.3" fill="#4a4a3a" opacity="0.55"/><ellipse cx="70.0" cy="185.9" rx="1.8" ry="1.2" fill="#4a4a3a" opacity="0.55"/><ellipse cx="195.2" cy="196.1" rx="1.4" ry="1.1" fill="#4a4a3a" opacity="0.55"/><rect width="200" height="200" filter="url(#gr)" opacity="0.55"/></g></svg></div>
<div class="a pt" style="left:1743px;top:290px;height:40px;line-height:40px">Badlands</div>
<div class="a pt" style="left:1984px;top:262px;line-height:48px;white-space:normal;width:80px;letter-spacing:-0.8px">South<br>Dakota</div>
</div></body></html>
